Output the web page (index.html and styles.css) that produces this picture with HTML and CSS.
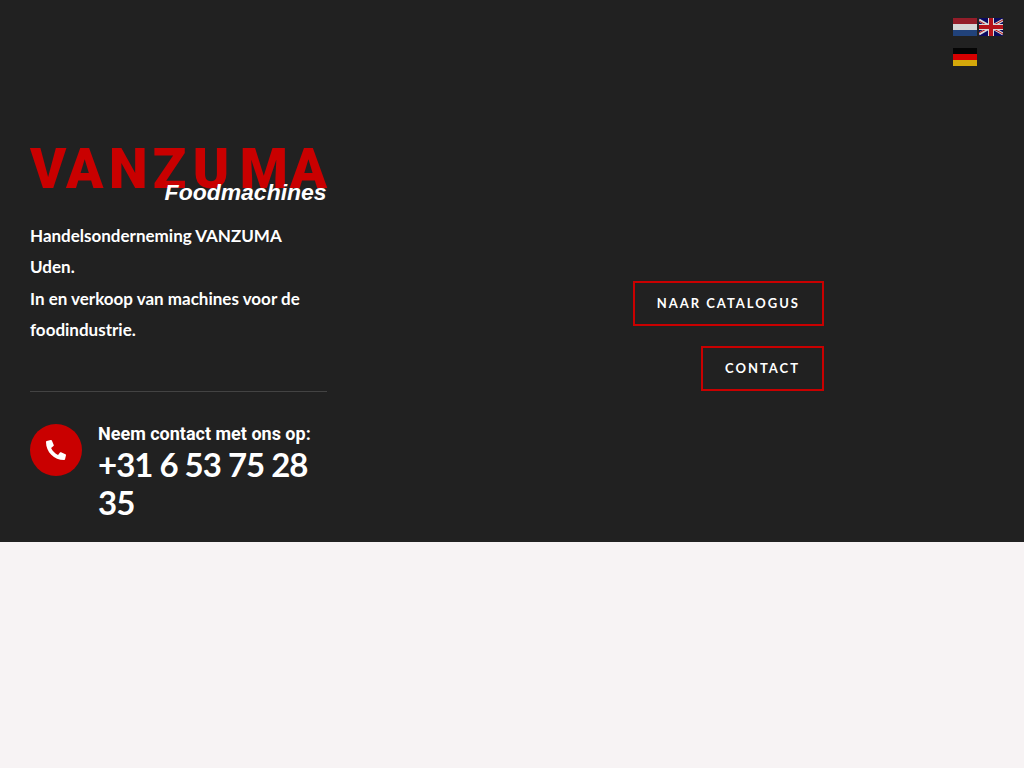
FILE: index.html
```html
<!DOCTYPE html>
<html lang="nl">
<head>
<meta charset="utf-8">
<meta name="viewport" content="width=device-width, initial-scale=1">
<title>VANZUMA Foodmachines</title>
<link rel="stylesheet" href="styles.css">
</head>
<body>
<header class="hero">
  <section class="intro">
    <a class="logo" href="#" aria-label="VANZUMA Foodmachines">
      <svg viewBox="0 0 297 54" role="img">
        <text class="logo-name" x="0 36 79 123 163 210 260" y="40">VANZUMA</text>
        <text class="logo-sub" x="297" y="52" text-anchor="end">Foodmachines</text>
      </svg>
    </a>
    <p class="lead">Handelsonderneming VANZUMA Uden.<br>In en verkoop van machines voor de foodindustrie.</p>
    <hr class="rule">
    <div class="phone">
      <span class="phone-icon">
        <svg viewBox="0 0 512 512" aria-hidden="true"><path d="M493.400 24.600l-104-24c-11.300-2.600-22.900 3.300-27.500 13.900l-48 112c-4.200 9.800-1.400 21.300 6.900 28l60.600 49.600c-36 76.700-98.900 140.500-177.200 177.200l-49.600-60.600c-6.800-8.300-18.200-11.100-28-6.900l-112 48C3.900 366.500-2 378.100.600 389.400l24 104C27.100 504.200 36.700 512 48 512c256.100 0 464-207.500 464-464 0-11.200-7.700-20.900-18.600-23.400z" transform="matrix(-1 0 0 1 512 0)"/></svg>
      </span>
      <div class="phone-body">
        <h3 class="phone-title">Neem contact met ons op:</h3>
        <a class="phone-number" href="tel:+31653752835">+31 6 53 75 28 35</a>
      </div>
    </div>
  </section>
  <nav class="actions">
    <a class="button" href="#">NAAR CATALOGUS</a>
    <a class="button" href="#">CONTACT</a>
  </nav>
  <nav class="languages">
    <a class="flag" href="#" aria-label="Nederlands"><svg viewBox="0 0 24 18"><path fill="#931d29" d="M0 0h24v6H0z"/><path fill="#d6d6d6" d="M0 6h24v6H0z"/><path fill="#21427a" d="M0 12h24v6H0z"/></svg></a>
    <a class="flag" href="#" aria-label="English"><svg viewBox="0 0 24 18"><path fill="#0a0a60" d="M0 0h24v18H0z"/><path stroke="#d8d8d8" stroke-width="3" d="M0 2l24 14M24 2L0 16"/><path stroke="#b51219" stroke-width="1" d="M0 3l24 13M24 2L0 15"/><path fill="#d8d8d8" d="M9 0h6v18H9zM0 6h24v6H0z"/><path fill="#b51219" d="M10 0h4v18h-4zM0 7h24v4H0z"/></svg></a>
    <a class="flag" href="#" aria-label="Deutsch"><svg viewBox="0 0 24 18"><path fill="#050505" d="M0 0h24v6H0z"/><path fill="#d60000" d="M0 6h24v6H0z"/><path fill="#d4a80a" d="M0 12h24v6H0z"/></svg></a>
  </nav>
</header>
</body>
</html>
```
FILE: styles.css
```css
* {
  box-sizing: border-box;
}

body {
  margin: 0;
  background: #f7f3f4;
  color: #fff;
  font-family: Lato, sans-serif;
}

a {
  color: inherit;
  text-decoration: none;
}

.hero {
  display: grid;
  grid-template-columns: 9fr 16fr 170px;
  padding: 18px 0 21px 30px;
  background: #212121;
}

.intro {
  padding-top: 130px;
}

.logo svg {
  display: block;
  width: 100%;
  overflow: visible;
}

.logo-name {
  fill: #c90000;
  font: 900 55px Roboto, sans-serif;
}

.logo-sub {
  fill: #fff;
  font: italic bold 23px "Liberation Sans", sans-serif;
}

.lead {
  margin: 18px 0 45px;
  font-size: 17px;
  font-weight: 700;
  line-height: 1.85;
}

.rule {
  height: 1px;
  margin: 0 0 32px;
  border: 0;
  background: #434343;
}

.phone {
  display: flex;
  gap: 16px;
}

.phone-icon {
  display: grid;
  flex: none;
  place-items: center;
  width: 52px;
  height: 52px;
  border-radius: 50%;
  background: #c90000;
}

.phone-icon svg {
  width: 20px;
  height: 20px;
  fill: #fff;
}

.phone-title {
  margin: 0 0 1px;
  font: 700 18px/20px Roboto, sans-serif;
}

.phone-number {
  display: block;
  font-size: 33px;
  font-weight: 700;
  line-height: 38px;
  letter-spacing: -1px;
}

.actions {
  display: flex;
  flex-direction: column;
  align-items: flex-end;
  justify-content: center;
  gap: 20px;
  padding: 133px 30px 0 0;
}

.button {
  padding: 12px 22px;
  border: 2px solid #c90000;
  font-size: 13px;
  font-weight: 700;
  line-height: 17px;
  letter-spacing: 2px;
}

.languages {
  display: flex;
  flex-wrap: wrap;
  align-content: flex-start;
  justify-self: end;
  gap: 12px 2px;
  width: 71px;
}

.flag,
.flag svg {
  display: block;
  width: 24px;
  height: 18px;
}
```
